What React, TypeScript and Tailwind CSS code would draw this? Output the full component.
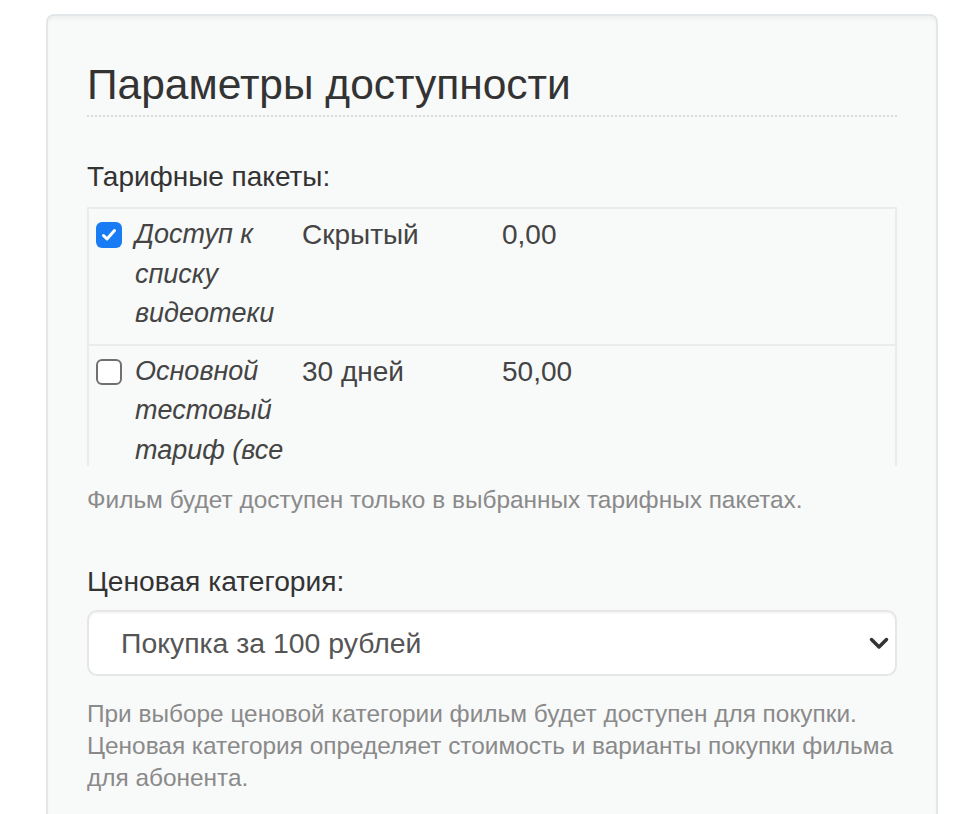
import { useState } from 'react';

interface Tariff {
  id: number;
  name: string;
  period: string;
  price: string;
  checked: boolean;
}

const tariffs: Tariff[] = [
  { id: 1, name: 'Доступ к списку видеотеки', period: 'Скрытый', price: '0,00', checked: true },
  { id: 2, name: 'Основной тестовый тариф (все фильмы и сериалы)', period: '30 дней', price: '50,00', checked: false },
];

function Checkbox({ checked, onChange }: { checked: boolean; onChange: () => void }) {
  return (
    <button
      type="button"
      onClick={onChange}
      className={`mt-[7px] flex h-[26px] w-[26px] flex-shrink-0 items-center justify-center rounded-[6px] ${
        checked ? 'bg-[#1a7cf5]' : 'border-2 border-[#707070] bg-white'
      }`}
    >
      {checked && (
        <svg width="18" height="18" viewBox="0 0 18 18" fill="none">
          <path d="M3.5 9.5l3.5 3.5 7.5-8.5" stroke="white" strokeWidth="3" strokeLinecap="round" strokeLinejoin="round" />
        </svg>
      )}
    </button>
  );
}

export default function App() {
  const [rows, setRows] = useState(tariffs);

  const toggle = (id: number) =>
    setRows(rows.map((r) => (r.id === id ? { ...r, checked: !r.checked } : r)));

  return (
    <div className="h-screen overflow-hidden bg-white pt-[14px] pl-[46px] pr-[24px] font-['Liberation_Sans',Arial,sans-serif]">
      <div className="rounded-[8px] border-2 border-[#e3e6e8] bg-[#f8f9f9] px-[39px] pt-[39px] pb-[80px] shadow-[inset_0_3px_3px_rgba(0,0,0,0.04)]">
        {/* heading */}
        <h2 className="border-b-2 border-dotted border-[#d9dcdc] text-[42.5px] leading-[60px] text-[#333]">
          Параметры доступности
        </h2>

        {/* tariffs */}
        <div className="mt-[40px] text-[28px] leading-[40px] text-[#333]">Тарифные пакеты:</div>
        <div className="mt-[10px] h-[259px] overflow-hidden">
          <div className="border-x-2 border-t-2 border-[#eaebeb]">
            {rows.map((row, i) => (
              <div
                key={row.id}
                className={`flex text-[28px] leading-[39.5px] text-[#444] ${i > 0 ? 'border-t-2 border-[#eaebeb]' : ''}`}
              >
                <div className="flex w-[205px] gap-[13px] pl-[7px] pr-[6px] pt-[6px] pb-[10px]">
                  <Checkbox checked={row.checked} onChange={() => toggle(row.id)} />
                  <span className="text-[27px] italic">{row.name}</span>
                </div>
                <div className="w-[200px] px-[8px] pt-[6px] pb-[10px]">{row.period}</div>
                <div className="flex-1 px-[8px] pt-[6px] pb-[10px]">{row.price}</div>
              </div>
            ))}
          </div>
        </div>
        <p className="mt-[18px] text-[24.4px] leading-[32px] text-[#8a8a8a]">
          Фильм будет доступен только в выбранных тарифных пакетах.
        </p>

        {/* price category */}
        <div className="mt-[45px] text-[28.2px] leading-[40px] text-[#333]">Ценовая категория:</div>
        <div className="relative mt-[9px]">
          <select className="h-[66px] w-full appearance-none rounded-[10px] border-2 border-[#e6e6e6] bg-white pl-[32px] text-[28.4px] text-[#555] shadow-[inset_0_2px_1px_rgba(0,0,0,0.03)] outline-none">
            <option>Покупка за 100 рублей</option>
            <option>Бесплатно</option>
          </select>
          <svg
            className="pointer-events-none absolute right-[8px] top-[27px]"
            width="20"
            height="13"
            viewBox="0 0 20 13"
            fill="none"
          >
            <path d="M2.5 2.5l7.5 7.5 7.5-7.5" stroke="#333" strokeWidth="3.5" strokeLinecap="round" strokeLinejoin="round" />
          </svg>
        </div>
        <p className="mt-[22px] text-[24.4px] leading-[32px] text-[#8a8a8a]">
          При выборе ценовой категории фильм будет доступен для покупки. Ценовая категория определяет стоимость и
          варианты покупки фильма для абонента.
        </p>
      </div>
    </div>
  );
}
